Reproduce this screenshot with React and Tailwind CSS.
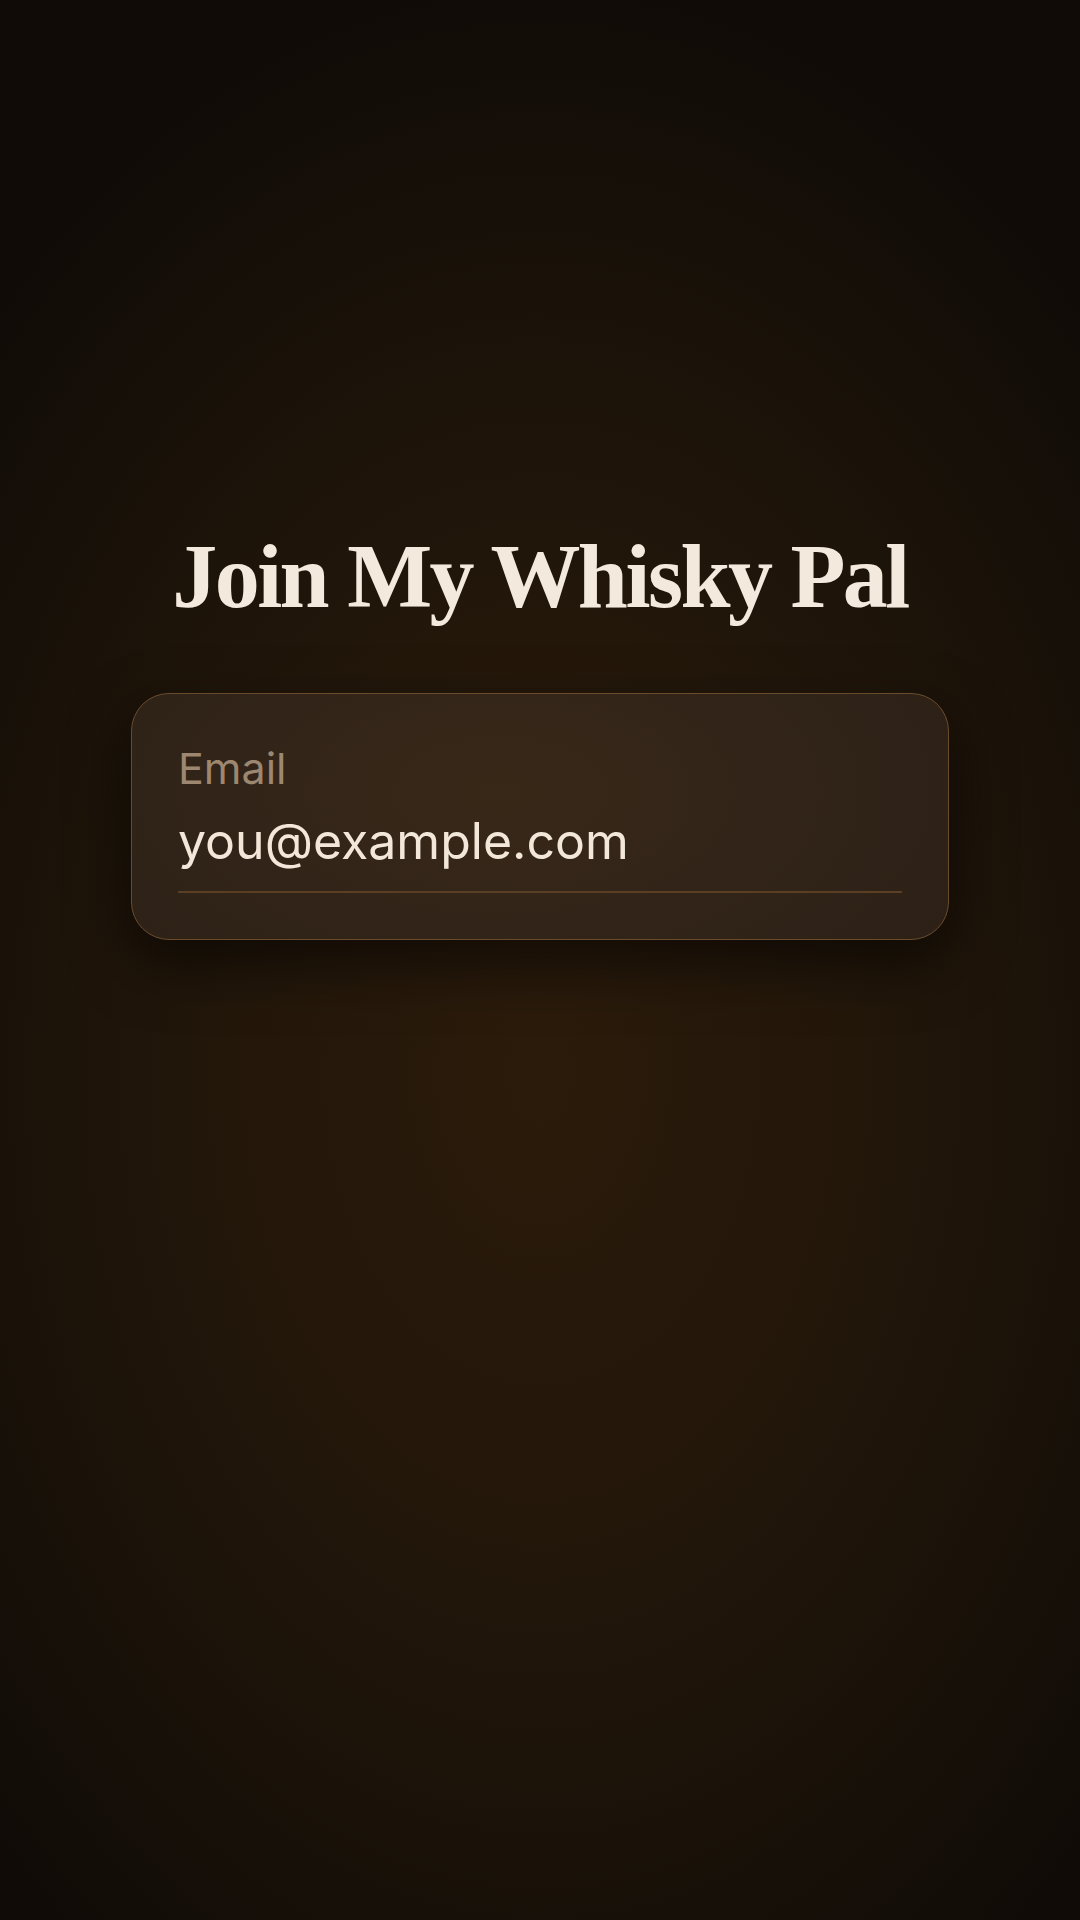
import React from "react";

export default function App() {
  return (
    <div className="min-h-[1920px] w-[1080px] bg-[#120d08] bg-[radial-gradient(ellipse_72%_58%_at_50%_56%,#2b1b0b_0%,#23170a_40%,#1a1209_70%,#100b07_100%)] flex flex-col items-center pt-[532px]">
      <h1
        className="text-[90px] leading-none font-bold tracking-[-0.028em] text-[#f3e9dc] whitespace-nowrap"
        style={{ fontFamily: '"Liberation Serif", "DejaVu Serif", serif' }}
      >
        Join My Whisky Pal
      </h1>
      <div className="mt-[71px] w-[818px] rounded-[38px] border border-[#6a4c2c] bg-[#2f2217] bg-[radial-gradient(ellipse_70%_120%_at_45%_40%,#382818_0%,#302318_60%,#2c2016_100%)] shadow-[0_24px_60px_rgba(0,0,0,0.55)] px-[46px] pt-[48px] pb-[46px]"
        style={{ fontFamily: 'Inter, "Noto Sans", sans-serif' }}
      >
        <div className="text-[43px] leading-[1.21] text-[#9d8770]">Email</div>
        <div className="mt-[17px] text-[50px] leading-[1.21] text-[#f2e7d8]">you@example.com</div>
        <div className="mt-[19px] h-[2px] bg-[#5a3f25]" />
      </div>
    </div>
  );
}
